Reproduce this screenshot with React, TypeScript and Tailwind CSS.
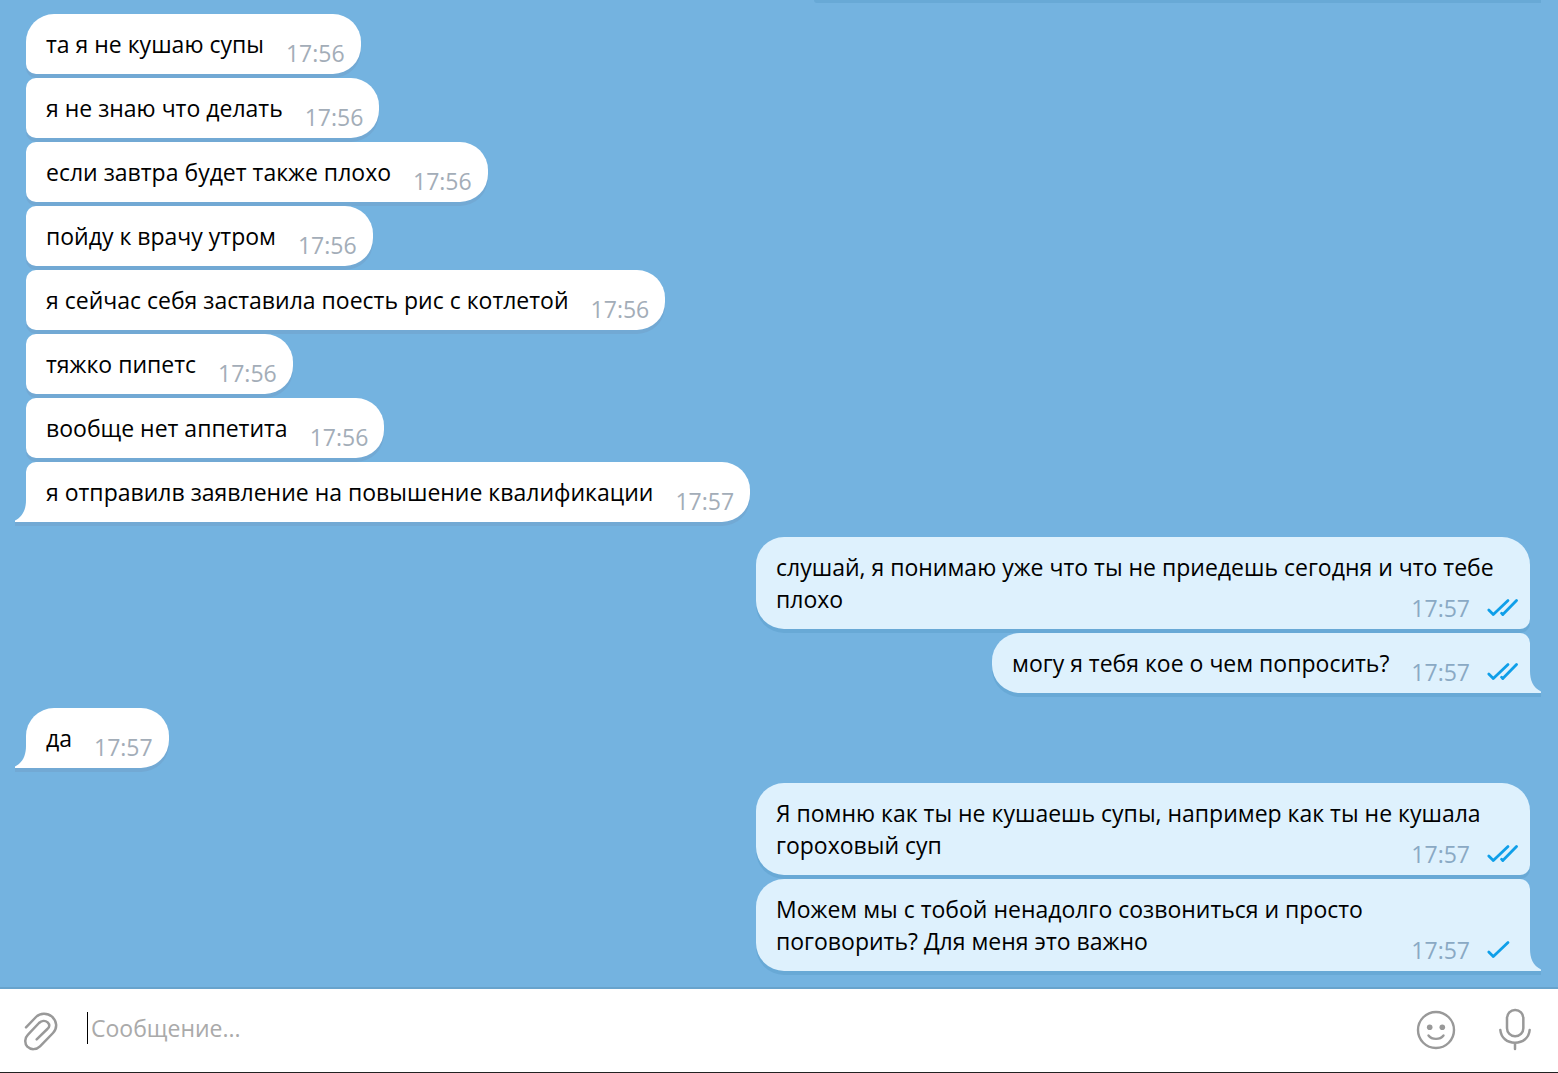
import React from 'react';

type Message = {
    text: string,
    time: string,
    status?: 'sent' | 'read',
}

type MessageGroup = {
    own: boolean,
    messages: Message[],
}

const CHAT: MessageGroup[] = [
    {
        own: false,
        messages: [
            { text: "та я не кушаю супы", time: "17:56" },
            { text: "я не знаю что делать", time: "17:56" },
            { text: "если завтра будет также плохо", time: "17:56" },
            { text: "пойду к врачу утром", time: "17:56" },
            { text: "я сейчас себя заставила поесть рис с котлетой", time: "17:56" },
            { text: "тяжко пипетс", time: "17:56" },
            { text: "вообще нет аппетита", time: "17:56" },
            { text: "я отправилв заявление на повышение квалификации", time: "17:57" },
        ],
    },
    {
        own: true,
        messages: [
            { text: "слушай, я понимаю уже что ты не приедешь сегодня и что тебе плохо", time: "17:57", status: 'read' },
            { text: "могу я тебя кое о чем попросить?", time: "17:57", status: 'read' },
        ],
    },
    {
        own: false,
        messages: [
            { text: "да", time: "17:57" },
        ],
    },
    {
        own: true,
        messages: [
            { text: "Я помню как ты не кушаешь супы, например как ты не кушала гороховый суп", time: "17:57", status: 'read' },
            { text: "Можем мы с тобой ненадолго созвониться и просто поговорить? Для меня это важно", time: "17:57", status: 'sent' },
        ],
    },
];

function Checks({ status }: { status: 'sent' | 'read' }) {
    return (
        <svg viewBox="0 0 32 20" className="w-8 h-5" fill="none" stroke="#0f9fe9" strokeWidth="2.8" strokeLinecap="round" strokeLinejoin="round" aria-label={status}>
            <path d="M2.8 12 7.3 16.6 22 2.6" />
            {status === 'read' && <path d="M15.6 15.2 16.8 16.6 30.5 2.6" />}
        </svg>
    );
}

// the little corner under the last bubble of a group, drawn for the left side
function Tail({ own }: { own: boolean }) {
    return (
        <svg
            viewBox="0 0 12 32"
            className={`absolute -bottom-1 w-3 h-8 ${own ? '-right-[11px] -scale-x-100' : '-left-[11px]'}`}
            aria-hidden="true"
        >
            <rect x="0" y="28" width="12" height="4" fill={own ? '#68a9d6' : '#72a9d4'} />
            <path d="M12 6H11C11 15 8 22.5 0 26.5V28H12Z" fill={own ? '#def1fd' : '#ffffff'} />
        </svg>
    );
}

function Bubble({ message, own, first, last }: { message: Message, own: boolean, first: boolean, last: boolean }) {
    const look = own
        ? `bg-[#def1fd] shadow-[0_4px_0_#68a9d6] rounded-l-[28px] ${first ? 'rounded-tr-[28px]' : 'rounded-tr-[10px]'} ${last ? '' : 'rounded-br-[10px]'}`
        : `bg-white shadow-[0_4px_0_#72a9d4] rounded-r-[28px] ${first ? 'rounded-tl-[28px]' : 'rounded-tl-[10px]'} ${last ? '' : 'rounded-bl-[10px]'}`;

    return (
        <li className={`relative flow-root max-w-[774px] px-5 pt-[14px] pb-[5px] text-black ${look}`}>
            {message.text}
            {/* floats so that it shares the last line of the text */}
            <span className={`float-right flex items-center gap-4 mt-[9px] ml-[22px] ${own ? '-mr-2 text-[#8aa9c4]' : '-mr-1 text-[#a3adb8]'}`}>
                <time>{message.time}</time>
                {message.status && <Checks status={message.status} />}
            </span>
            {last && <Tail own={own} />}
        </li>
    );
}

function Composer() {
    return (
        <form className="flex items-center h-[86px] pl-6 pr-[27px] pb-0.5 bg-white border-t-2 border-t-[#68a3cc] border-b border-b-[#222222]">
            <button type="button" aria-label="Прикрепить файл" className="pt-1">
                <svg viewBox="0 0 102 117" className="w-[34px] h-[39px]" fill="none" stroke="#999999" strokeWidth="7.5" strokeLinecap="round" strokeLinejoin="round">
                    <path d="M6 46 36 15C49 2 70 2 84 14C99 28 101 48 87 63L48 103C37 114 20 114 10 104C1 94 2 78 12 68L45 33C53 25 64 25 71 31C78 38 77 45 70 51L38 82" />
                </svg>
            </button>
            <div className="flex flex-1 items-center min-w-0 pb-1 ml-[29px]">
                <span className="w-px h-8 bg-black" />
                <input
                    type="text"
                    aria-label="Сообщение"
                    placeholder="Сообщение..."
                    className="flex-1 min-w-0 ml-[3px] h-8 outline-none placeholder:text-[#aaaaaa]"
                />
            </div>
            <button type="button" aria-label="Эмодзи" className="mr-[43px]">
                <svg viewBox="0 0 40 40" className="w-10 h-10" fill="none" stroke="#999999" strokeWidth="2.4" strokeLinecap="round">
                    <circle cx="20" cy="20" r="18" />
                    <circle cx="13.7" cy="17.3" r="2.8" fill="#999999" stroke="none" />
                    <circle cx="26.3" cy="17.3" r="2.8" fill="#999999" stroke="none" />
                    <path d="M12.5 25.5C16 30 24 30 27.5 25.5" />
                </svg>
            </button>
            <button type="button" aria-label="Голосовое сообщение">
                <svg viewBox="0 0 96 138" className="w-8 h-[46px]" fill="none" stroke="#999999" strokeWidth="7.5" strokeLinecap="round">
                    <rect x="24" y="9" width="49" height="79" rx="24" />
                    <path d="M4 69C6 92 24 107 48 107S90 92 92 69M48 107V126" />
                </svg>
            </button>
        </form>
    );
}

export default function App() {
    return (
        <div className="flex flex-col min-h-screen bg-[#74b3e0] font-['Open_Sans','Noto_Sans',sans-serif] text-[23px] leading-8">
            <main className="flex flex-col flex-1 justify-between pb-4 pl-[26px] pr-7">
                {/* bottom edge of the message scrolled out above */}
                <div className="self-end w-[727px] h-[3px] -mr-[11px] rounded-bl-lg bg-[#68a9d6]" />
                <div className="flex flex-col gap-[15px]">
                    {CHAT.map((group, index) => (
                        <ul key={index} className={`flex flex-col gap-1 ${group.own ? 'items-end' : 'items-start'}`}>
                            {group.messages.map((message, i) => (
                                <Bubble
                                    key={i}
                                    message={message}
                                    own={group.own}
                                    first={i === 0}
                                    last={i === group.messages.length - 1}
                                />
                            ))}
                        </ul>
                    ))}
                </div>
            </main>
            <Composer />
        </div>
    );
}
